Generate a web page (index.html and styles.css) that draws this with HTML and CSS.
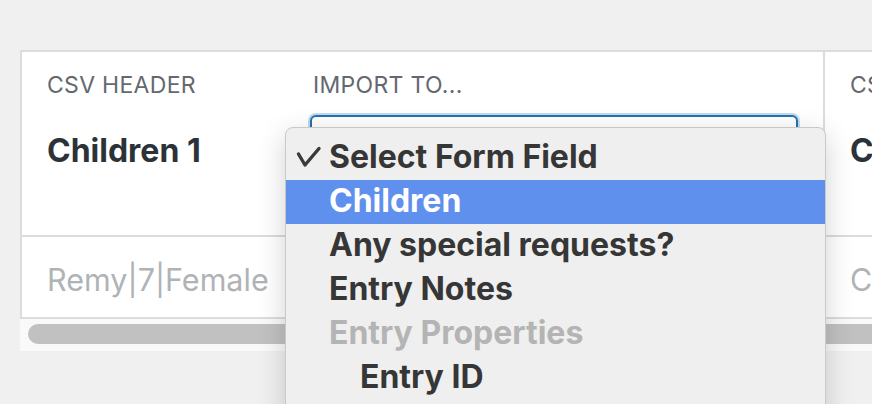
FILE: index.html
```html
<!DOCTYPE html>
<html lang="en">
<head>
<meta charset="utf-8">
<title>Import CSV</title>
<link rel="stylesheet" href="styles.css">
</head>
<body>
<div class="page">
  <div class="frame">
    <div class="cards">
      <div class="card">
        <div class="head">
          <div class="field">
            <div class="label">CSV HEADER</div>
            <div class="value">Children 1</div>
          </div>
          <div class="field">
            <div class="label">IMPORT TO...</div>
            <div class="select"></div>
          </div>
        </div>
        <div class="sample">Remy|7|Female</div>
      </div>
      <div class="card">
        <div class="head">
          <div class="field">
            <div class="label">CSV HEADER</div>
            <div class="value">Children 2</div>
          </div>
        </div>
        <div class="sample">Cat|5|Male</div>
      </div>
    </div>
  </div>
  <div class="track"><div class="thumb"></div></div>

  <div class="menu">
    <div class="item checked">
      <svg class="check" width="26" height="24" viewBox="0 0 26 24"><path d="M2.5 9 L9 20 L23 3.5" fill="none" stroke="#3a3a3a" stroke-width="3.4" stroke-linecap="round" stroke-linejoin="round"/></svg>
      Select Form Field
    </div>
    <div class="item active">Children</div>
    <div class="item">Any special requests?</div>
    <div class="item">Entry Notes</div>
    <div class="item disabled">Entry Properties</div>
    <div class="item sub">Entry ID</div>
  </div>
</div>
</body>
</html>
```

FILE: styles.css
```css
html, body {
  margin: 0;
  padding: 0;
  background: #f0f0f1;
  overflow: hidden;
  font-family: Inter, "Noto Sans", sans-serif;
}

.page {
  position: relative;
  width: 872px;
  height: 404px;
  padding: 50px 0 0 20px;
  box-sizing: border-box;
  overflow: hidden;
}

.frame {
  width: 1700px;
  border: 2px solid #dcdcde;
  border-right: none;
  background: #fff;
}

.cards {
  display: flex;
}

.card {
  width: 801px;
  flex: none;
}

.card + .card {
  border-left: 2px solid #dcdcde;
}

.head {
  height: 185px;
  box-sizing: border-box;
  padding: 18px 25px 0 25px;
  display: grid;
  grid-template-columns: 266px 1fr;
  border-bottom: 2px solid #dcdcde;
}

.label {
  height: 30px;
  line-height: 30px;
  font-size: 23px;
  color: #646970;
  letter-spacing: 0.3px;
}

.value {
  margin-top: 15px;
  height: 70px;
  line-height: 72px;
  font-size: 32px;
  font-weight: 700;
  color: #2c3338;
}

.select {
  margin-top: 15px;
  margin-left: -3px;
  height: 70px;
  border: 2px solid #2271b1;
  border-radius: 6px;
  box-shadow: 0 0 0 2px #c5d9ed;
  background: #fff;
}

.sample {
  height: 80px;
  line-height: 86px;
  padding-left: 25px;
  font-size: 30.5px;
  color: #b0b3b6;
}

.track {
  width: 1700px;
  height: 32px;
  background: #f9f9f9;
  box-sizing: border-box;
  padding: 5px 0 6px 8px;
}

.thumb {
  height: 20px;
  width: 1600px;
  border-radius: 10px;
  background: #c1c1c1;
}

.menu {
  position: absolute;
  left: 285px;
  top: 127px;
  width: 541px;
  height: 320px;
  box-sizing: border-box;
  padding-top: 8px;
  background: #efefef;
  border: 1px solid #c9c9c9;
  border-radius: 8px;
  box-shadow: 0 8px 28px rgba(0, 0, 0, 0.18);
}

.item {
  position: relative;
  height: 44px;
  line-height: 42px;
  padding-left: 43px;
  font-size: 32px;
  font-weight: 700;
  color: #363636;
}

.item.active {
  background: #6090ee;
  color: #fff;
}

.item.disabled {
  color: #b4b4b4;
}

.item.sub {
  padding-left: 74px;
}

.check {
  position: absolute;
  left: 10px;
  top: 9px;
}
```
